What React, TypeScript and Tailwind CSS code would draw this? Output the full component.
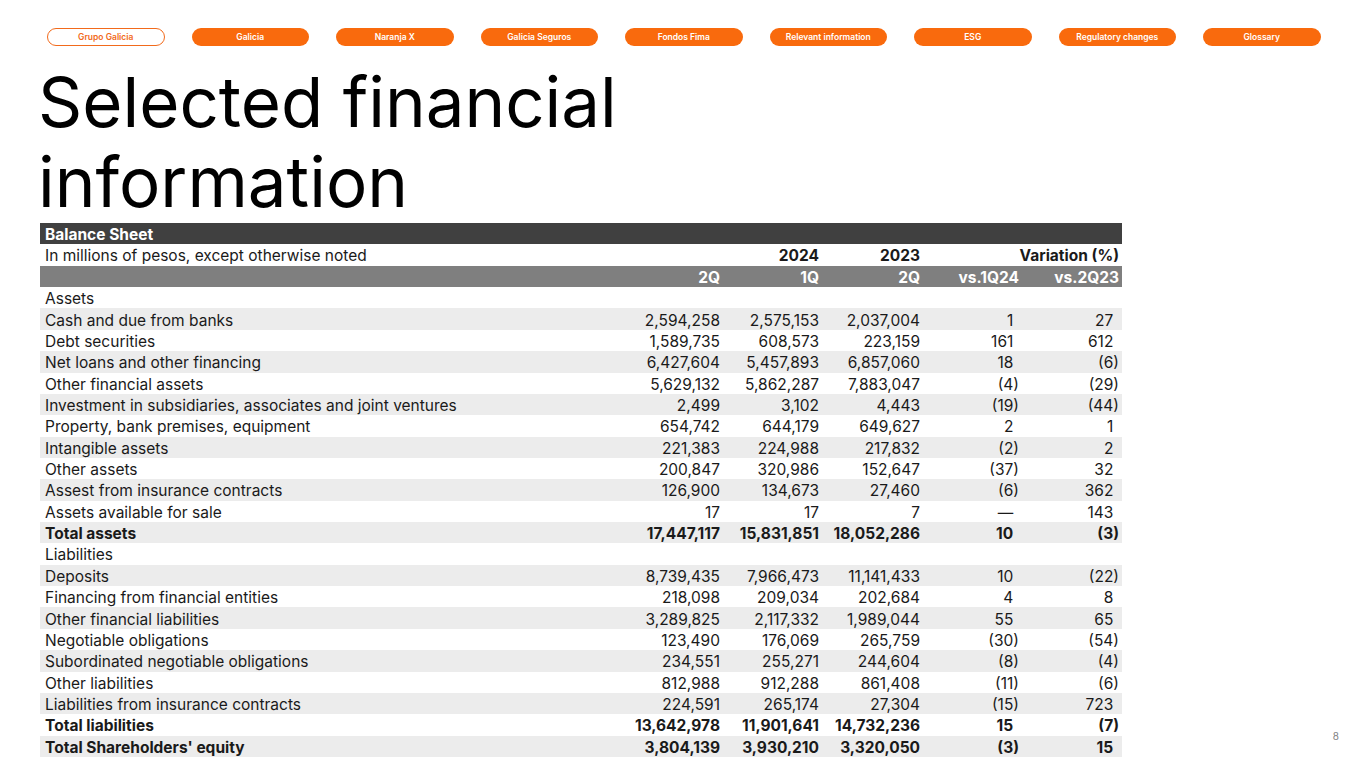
import React from "react";

const navItems = [
  "Grupo Galicia",
  "Galicia",
  "Naranja X",
  "Galicia Seguros",
  "Fondos Fima",
  "Relevant information",
  "ESG",
  "Regulatory changes",
  "Glossary",
];

type Row = { label: string; v?: string[]; bold?: boolean };

const rows: Row[] = [
  { label: "Assets" },
  { label: "Cash and due from banks", v: ["2,594,258", "2,575,153", "2,037,004", "1", "27"] },
  { label: "Debt securities", v: ["1,589,735", "608,573", "223,159", "161", "612"] },
  { label: "Net loans and other financing", v: ["6,427,604", "5,457,893", "6,857,060", "18", "(6)"] },
  { label: "Other financial assets", v: ["5,629,132", "5,862,287", "7,883,047", "(4)", "(29)"] },
  { label: "Investment in subsidiaries, associates and joint ventures", v: ["2,499", "3,102", "4,443", "(19)", "(44)"] },
  { label: "Property, bank premises, equipment", v: ["654,742", "644,179", "649,627", "2", "1"] },
  { label: "Intangible assets", v: ["221,383", "224,988", "217,832", "(2)", "2"] },
  { label: "Other assets", v: ["200,847", "320,986", "152,647", "(37)", "32"] },
  { label: "Assest from insurance contracts", v: ["126,900", "134,673", "27,460", "(6)", "362"] },
  { label: "Assets available for sale", v: ["17", "17", "7", "—", "143"] },
  { label: "Total assets", v: ["17,447,117", "15,831,851", "18,052,286", "10", "(3)"], bold: true },
  { label: "Liabilities" },
  { label: "Deposits", v: ["8,739,435", "7,966,473", "11,141,433", "10", "(22)"] },
  { label: "Financing from financial entities", v: ["218,098", "209,034", "202,684", "4", "8"] },
  { label: "Other financial liabilities", v: ["3,289,825", "2,117,332", "1,989,044", "55", "65"] },
  { label: "Negotiable obligations", v: ["123,490", "176,069", "265,759", "(30)", "(54)"] },
  { label: "Subordinated negotiable obligations", v: ["234,551", "255,271", "244,604", "(8)", "(4)"] },
  { label: "Other liabilities", v: ["812,988", "912,288", "861,408", "(11)", "(6)"] },
  { label: "Liabilities from insurance contracts", v: ["224,591", "265,174", "27,304", "(15)", "723"] },
  { label: "Total liabilities", v: ["13,642,978", "11,901,641", "14,732,236", "15", "(7)"], bold: true },
  { label: "Total Shareholders' equity", v: ["3,804,139", "3,930,210", "3,320,050", "(3)", "15"], bold: true },
];

function VarCell({ v }: { v: string }) {
  const neg = v.startsWith("(");
  return (
    <div className="w-[100px] shrink-0 pr-[3px] text-right">
      {v}
      {!neg && <span className="invisible">)</span>}
    </div>
  );
}

export default function App() {
  return (
    <div
      className="w-[1365px] h-[768px] bg-white overflow-hidden text-[#1a1a1a]"
      style={{ fontFamily: "Inter, 'Noto Sans', sans-serif" }}
    >
      {/* Nav */}
      <div className="flex gap-[27px] pl-[47px] pt-[28px]">
        {navItems.map((n, i) =>
          i === 0 ? (
            <div
              key={n}
              className="w-[117.5px] h-[18px] rounded-full border border-[#f26a1b] text-[#f26a1b] text-[8.5px] font-semibold flex items-center justify-center"
            >
              {n}
            </div>
          ) : (
            <div
              key={n}
              className="w-[117.5px] h-[18px] rounded-full bg-[#f96a0d] text-white text-[8.5px] font-semibold flex items-center justify-center"
            >
              {n}
            </div>
          )
        )}
      </div>

      {/* Title */}
      <h1 className="pl-[38px] mt-[16px] text-[69px] leading-[80px] font-normal text-black">
        Selected financial
        <br />
        information
      </h1>

      {/* Table + page number */}
      <div className="flex ml-[40px] mt-[1px]">
        <div className="w-[1082px] text-[15.5px]">
          <div className="h-[21.36px] pt-[2px] bg-[#404040] text-white font-bold flex items-center pl-[5px]">
            Balance Sheet
          </div>
          <div className="h-[21.36px] pt-[2px] flex items-center">
            <div className="flex-1 pl-[5px]">In millions of pesos, except otherwise noted</div>
            <div className="w-[100px] shrink-0" />
            <div className="w-[100px] shrink-0 pr-[3px] text-right font-bold">2024</div>
            <div className="w-[100px] shrink-0 pr-[2px] text-right font-bold">2023</div>
            <div className="w-[200px] shrink-0 pr-[3px] text-right font-bold">Variation (%)</div>
          </div>
          <div className="h-[21.36px] pt-[2px] bg-[#7f7f7f] text-white font-bold flex items-center">
            <div className="flex-1" />
            <div className="w-[100px] shrink-0 pr-[2px] text-right">2Q</div>
            <div className="w-[100px] shrink-0 pr-[3px] text-right">1Q</div>
            <div className="w-[100px] shrink-0 pr-[2px] text-right">2Q</div>
            <div className="w-[100px] shrink-0 pr-[3px] text-right">vs.1Q24</div>
            <div className="w-[100px] shrink-0 pr-[3px] text-right">vs.2Q23</div>
          </div>
          {rows.map((r, i) => (
            <div
              key={r.label}
              className={`h-[21.36px] pt-[2px] flex items-center ${i % 2 === 1 ? "bg-[#ececec]" : "bg-white"} ${r.bold ? "font-bold" : ""}`}
            >
              <div className="flex-1 pl-[5px] whitespace-nowrap">{r.label}</div>
              {r.v && (
                <>
                  <div className="w-[100px] shrink-0 pr-[2px] text-right">{r.v[0]}</div>
                  <div className="w-[100px] shrink-0 pr-[3px] text-right">{r.v[1]}</div>
                  <div className="w-[100px] shrink-0 pr-[2px] text-right">{r.v[2]}</div>
                  <VarCell v={r.v[3]} />
                  <VarCell v={r.v[4]} />
                </>
              )}
            </div>
          ))}
        </div>
        <div className="flex-1 flex items-end justify-end pr-[26px] pb-[13px] text-[10px] text-[#7f7f7f]">
          8
        </div>
      </div>
    </div>
  );
}
